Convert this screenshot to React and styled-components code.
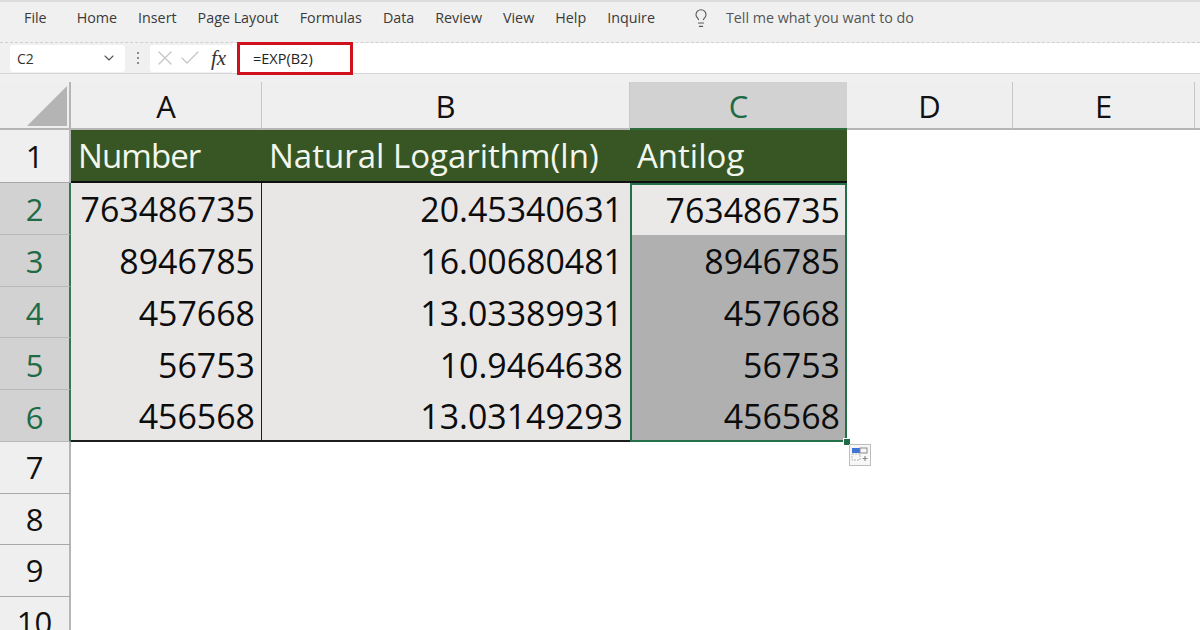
import React from 'react';
import styled, { createGlobalStyle } from 'styled-components';
import { ChevronDown, Lightbulb, X, Check } from 'lucide-react';

const GlobalStyle = createGlobalStyle`
  html, body {
    margin: 0;
    padding: 0;
    background: #fff;
    overflow: hidden;
  }
`;

const Window = styled.div`
  width: 1200px;
  height: 630px;
  overflow: hidden;
  background: #f0f0f0;
  display: flex;
  flex-direction: column;
  font-family: "Open Sans", "Noto Sans", sans-serif;
  color: #111;
`;

const Ribbon = styled.div`
  height: 43px;
  flex: none;
  display: flex;
  align-items: center;
  padding: 0 0 9px 24px;
  box-sizing: border-box;
  border-top: 2px solid #dcdcdc;
  border-bottom: 1px dashed #d0d0d0;
  background: #f0f0f0;
  font-size: 14.3px;
  color: #3a3a3a;
`;

const Tab = styled.span`
  margin-right: ${(p) => p.$gap || 21}px;
  white-space: nowrap;
`;

const TellMe = styled.div`
  display: flex;
  align-items: center;
  gap: 15px;
  margin-left: 15px;
  color: #555;
`;

const FormulaBar = styled.div`
  height: 31px;
  flex: none;
  display: flex;
  align-items: center;
  padding-left: 10px;
  border-bottom: 1px solid #d6d6d6;
  box-sizing: border-box;
  background: linear-gradient(to right, #f0f0f0 232px, #fff 232px);
`;

const NameBox = styled.div`
  width: 115px;
  height: 27px;
  box-sizing: border-box;
  background: #fff;
  border-radius: 3px;
  display: flex;
  align-items: center;
  justify-content: space-between;
  padding: 0 8px 0 7px;
  font-size: 14px;
  color: #333;
`;

const Dots = styled.div`
  width: 25px;
  display: flex;
  flex-direction: column;
  align-items: center;
  gap: 3px;
  flex: none;

  i {
    width: 2px;
    height: 2px;
    background: #8c8c8c;
    display: block;
  }
`;

const FormulaButtons = styled.div`
  width: 82px;
  height: 27px;
  background: #fff;
  border-radius: 3px;
  box-sizing: border-box;
  display: flex;
  align-items: center;
  gap: 1px;
  padding-left: 3px;
`;

const Fx = styled.span`
  font-family: "Liberation Serif", serif;
  font-style: italic;
  font-size: 21px;
  color: #333;
  margin-left: 8px;
  line-height: 1;
`;

const FormulaInput = styled.div`
  width: 116px;
  height: 33px;
  margin: 0 0 0 5px;
  box-sizing: border-box;
  border: 3px solid #d0101c;
  background: #fff;
  font-size: 14.5px;
  color: #222;
  display: flex;
  align-items: center;
  padding-left: 13px;
`;

const Sheet = styled.div`
  margin-top: 8px;
  flex: 1;
  min-height: 0;
  display: grid;
  grid-template-columns: 71px 191px 368px 217px 166px 182px 1fr;
  grid-template-rows: 48px 53px repeat(5, 51.8px) repeat(4, 51.6px);
  background: #fff;
  position: relative;
`;

const Corner = styled.div`
  background: #efefef;
  border-right: 2px solid #b5b5b5;
  border-bottom: 2px solid #b5b5b5;
  box-sizing: border-box;
  display: flex;
  align-items: flex-end;
  justify-content: flex-end;
  padding: 0 2px 1px 0;
`;

const ColHead = styled.div`
  background: ${(p) => (p.$active ? '#d2d2d2' : '#efefef')};
  color: ${(p) => (p.$active ? '#1f6b45' : '#111')};
  border-right: ${(p) => (p.$active ? 'none' : '1px solid #c6c6c6')};
  border-bottom: ${(p) => (p.$active ? '2px solid #2f6b3c' : '2px solid #b5b5b5')};
  box-sizing: border-box;
  display: flex;
  align-items: center;
  justify-content: center;
  font-size: 31px;
  line-height: 1;
  padding-top: 2px;
`;

const RowHead = styled.div`
  background: ${(p) => (p.$active ? '#d2d2d2' : '#efefef')};
  color: ${(p) => (p.$active ? '#1f6b45' : '#111')};
  border-right: 2px solid ${(p) => (p.$active ? '#2f7a4e' : '#b5b5b5')};
  border-bottom: 1px solid ${(p) => (p.$active ? '#b9b9b9' : '#a8a8a8')};
  box-sizing: border-box;
  display: flex;
  align-items: center;
  justify-content: center;
  padding-top: ${(p) => (p.$active ? 3 : 1)}px;
  font-size: 31px;
  line-height: 1;
  overflow: hidden;
`;

const HeadCell = styled.div`
  background: #375623;
  color: #f3f6ee;
  border-bottom: 2px solid #101010;
  box-sizing: border-box;
  display: flex;
  align-items: center;
  padding-left: 7px;
  font-size: 33px;
  line-height: 1;
  letter-spacing: ${(p) => p.$track || 0}px;
  white-space: nowrap;
`;

const DataCell = styled.div`
  background: #e9e6e6;
  border-right: ${(p) => (p.$divider ? '1.5px solid #1d1d1d' : 'none')};
  border-bottom: ${(p) => (p.$last ? '2px solid #1d1d1d' : 'none')};
  box-sizing: border-box;
  display: flex;
  align-items: center;
  justify-content: flex-end;
  padding: 3px ${(p) => (p.$divider ? 6 : 7)}px 0 0;
  font-size: 33.9px;
  line-height: 1;
  color: #0c0c0c;
`;

// C2:C6 carries the green selection frame on its own cell edges
const SelectedCell = styled(DataCell)`
  position: relative;
  background: ${(p) => (p.$first ? '#ebe8e8' : '#b0b0b0')};
  border-left: 2px solid #24704a;
  border-right: 2px solid #24704a;
  border-top: ${(p) => (p.$first ? '2px solid #24704a' : 'none')};
  border-bottom: ${(p) => (p.$last ? '2px solid #24704a' : 'none')};
  padding-right: 5px;
`;

const Blank = styled.div`
  background: #fff;
`;

const HeadGap = styled.div`
  background: #efefef;
  border-bottom: 2px solid #b5b5b5;
  box-sizing: border-box;
`;

const FillHandle = styled.div`
  position: absolute;
  right: -6px;
  bottom: -6px;
  width: 6px;
  height: 6px;
  background: #1f6b45;
  border: 1px solid #fff;
`;

const PasteOptions = styled.div`
  position: absolute;
  left: 849px;
  top: 362px;
  width: 22px;
  height: 22px;
  box-sizing: border-box;
  border: 1px solid #bdbdbd;
  background: #f7f7f7;
  display: flex;
  align-items: center;
  justify-content: center;
`;

const numbers = [
  ['763486735', '20.45340631', '763486735'],
  ['8946785', '16.00680481', '8946785'],
  ['457668', '13.03389931', '457668'],
  ['56753', '10.9464638', '56753'],
  ['456568', '13.03149293', '456568'],
];

const tabs = ['Home', 'Insert', 'Page Layout', 'Formulas', 'Data', 'Review', 'View', 'Help', 'Inquire'];

export default function App() {
  return (
    <Window>
      <GlobalStyle />
      <Ribbon>
        <Tab $gap={30}>File</Tab>
        {tabs.map((t) => (
          <Tab key={t}>{t}</Tab>
        ))}
        <TellMe>
          <Lightbulb size={20} strokeWidth={1.3} color="#555" />
          <span>Tell me what you want to do</span>
        </TellMe>
      </Ribbon>

      <FormulaBar>
        <NameBox>
          C2
          <ChevronDown size={16} strokeWidth={1.6} color="#555" />
        </NameBox>
        <Dots>
          <i />
          <i />
          <i />
        </Dots>
        <FormulaButtons>
          <X size={24} strokeWidth={1.2} color="#c4c4c4" />
          <Check size={24} strokeWidth={1.2} color="#c4c4c4" />
          <Fx>fx</Fx>
        </FormulaButtons>
        <FormulaInput>=EXP(B2)</FormulaInput>
      </FormulaBar>

      <Sheet>
        <Corner>
          <svg width="44" height="44" viewBox="0 0 44 44">
            <polygon points="44,3 44,43 4,43" fill="#b4b4b4" />
          </svg>
        </Corner>
        <ColHead>A</ColHead>
        <ColHead>B</ColHead>
        <ColHead $active>C</ColHead>
        <ColHead>D</ColHead>
        <ColHead>E</ColHead>
        <HeadGap />

        <RowHead>1</RowHead>
        <HeadCell $track={-0.9}>Number</HeadCell>
        <HeadCell>Natural Logarithm(ln)</HeadCell>
        <HeadCell>Antilog</HeadCell>
        <Blank />
        <Blank />
        <Blank />

        {numbers.map((row, i) => (
          <React.Fragment key={row[0]}>
            <RowHead $active>{i + 2}</RowHead>
            <DataCell $divider $last={i === 4}>{row[0]}</DataCell>
            <DataCell $last={i === 4}>{row[1]}</DataCell>
            <SelectedCell $first={i === 0} $last={i === 4}>
              {row[2]}
              {i === 4 && <FillHandle />}
            </SelectedCell>
            <Blank />
            <Blank />
            <Blank />
          </React.Fragment>
        ))}

        {[7, 8, 9, 10].map((n) => (
          <React.Fragment key={n}>
            <RowHead>{n}</RowHead>
            <Blank />
            <Blank />
            <Blank />
            <Blank />
            <Blank />
            <Blank />
          </React.Fragment>
        ))}

        <PasteOptions>
          <svg width="18" height="16" viewBox="0 0 18 16">
            <rect x="1" y="1" width="8" height="5" fill="#3f73d6" />
            <rect x="9" y="1" width="7" height="5" fill="none" stroke="#8a8a8a" strokeWidth="1" />
            <rect x="1" y="7" width="8" height="6" fill="none" stroke="#b5b5b5" strokeWidth="1" strokeDasharray="2 1" />
            <path d="M14 9v5M11.5 11.5h5" stroke="#8a8a8a" strokeWidth="1.2" />
          </svg>
        </PasteOptions>
      </Sheet>
    </Window>
  );
}
